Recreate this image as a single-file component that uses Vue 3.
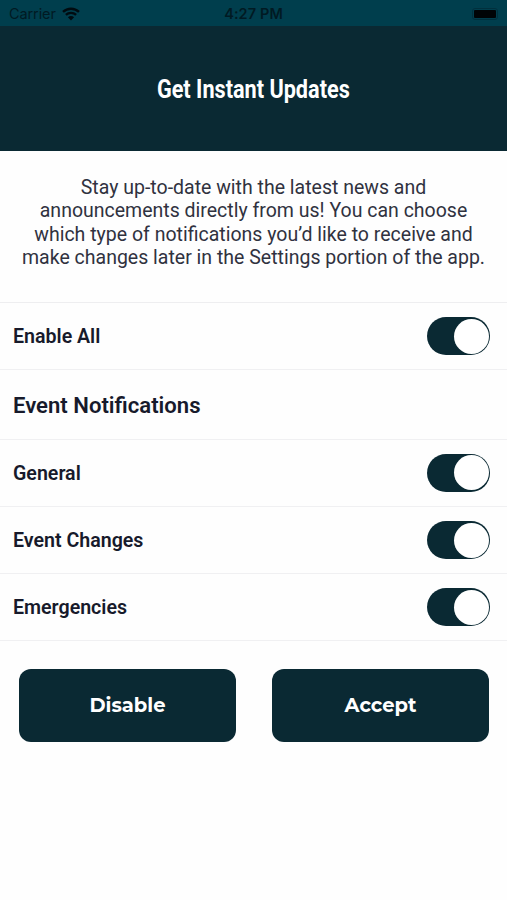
<template>
  <div class="screen">
    <div class="status-bar">
      <div class="carrier">
        <span>Carrier</span>
        <svg class="wifi" viewBox="0 0 18 14" width="18" height="14">
          <path d="M1 4.9a11.6 11.6 0 0 1 16 0" />
          <path d="M3.9 7.9a7.4 7.4 0 0 1 10.2 0" />
          <path class="dot" d="M9 13.4 5.9 10.3a4.4 4.4 0 0 1 6.2 0z" />
        </svg>
      </div>
      <span class="time">4:27 PM</span>
      <div class="battery"><i /></div>
    </div>

    <header class="header">
      <h1>Get Instant Updates</h1>
    </header>

    <p class="intro">
      Stay up-to-date with the latest news and<br />
      announcements directly from us! You can choose<br />
      which type of notifications you’d like to receive and<br />
      make changes later in the Settings portion of the app.
    </p>

    <div class="list">
      <div class="row" @click="toggleAll">
        <span class="name">Enable All</span>
        <span class="switch" :class="{ on: allEnabled }" />
      </div>
      <h2>Event Notifications</h2>
      <div v-for="item in items" :key="item.name" class="row" @click="item.on = !item.on">
        <span class="name">{{ item.name }}</span>
        <span class="switch" :class="{ on: item.on }" />
      </div>
    </div>

    <div class="actions">
      <button @click="setAll(false)">Disable</button>
      <button @click="setAll(true)">Accept</button>
    </div>
  </div>
</template>

<script setup>
import { computed, ref } from 'vue'

const items = ref([
  { name: 'General',       on: true },
  { name: 'Event Changes', on: true },
  { name: 'Emergencies',   on: true },
])

const allEnabled = computed(() => items.value.every(i => i.on))

function setAll(value) {
  items.value.forEach(i => { i.on = value })
}

function toggleAll() {
  setAll(!allEnabled.value)
}
</script>

<style>
body { background: #fff; }
</style>

<style scoped>
.screen {
  height: 900px;
  overflow: hidden;
  background: #fefefe;
  color: #171a2b;
  font-family: Roboto, "Liberation Sans", sans-serif;
}

/* ── status bar ── */
.status-bar {
  box-sizing: border-box;
  height: 26px;
  padding: 1px 9px 0;
  display: grid;
  grid-template-columns: 1fr auto 1fr;
  align-items: center;
  background: #003e4d;
  color: #001a23;
  font: 14.5px Inter, sans-serif;
}

.carrier {
  display: flex;
  align-items: center;
  gap: 6px;
  letter-spacing: -.1px;
}

.wifi path {
  fill: none;
  stroke: #000b10;
  stroke-width: 2.4;
}

.wifi .dot {
  fill: #000b10;
  stroke: none;
}

.time {
  font-weight: 600;
  letter-spacing: .1px;
}

.battery {
  justify-self: end;
  padding: 1px;
  border: 1px solid #00303d;
  border-radius: 3px;
}

.battery i {
  display: block;
  width: 22px;
  height: 8px;
  border-radius: 1px;
  background: #000406;
}

/* ── header ── */
.header {
  height: 125px;
  display: flex;
  justify-content: center;
  background: #0a2933;
}

h1 {
  margin: 49px 0 0;
  color: #fff;
  font-size: 25px;
  line-height: 30px;
  font-weight: 700;
  white-space: nowrap;
  transform: scaleX(.866);
}

.intro {
  margin: 0;
  padding: 25px 0 33px;
  color: #30323f;
  font-size: 19.5px;
  line-height: 23.25px;
  text-align: center;
  white-space: nowrap;
}

/* ── notification rows ── */
.list {
  border-top: 1px solid #eeeef0;
}

.row,
h2 {
  box-sizing: border-box;
  height: 67.3px;
  margin: 0;
  padding: 0 17px 0 13px;
  display: flex;
  align-items: center;
  justify-content: space-between;
  border-bottom: 1px solid #f0f0f2;
}

.name {
  padding-top: 1px;
  font-size: 19.6px;
  font-weight: 600;
}

h2 {
  height: 69.3px;
  padding-top: 1px;
  font-size: 22.1px;
  font-weight: 600;
}

.switch {
  box-sizing: border-box;
  width: 63px;
  height: 38px;
  padding: 1.5px;
  display: flex;
  border-radius: 19px;
  background: #c9ced2;
}

.switch::after {
  content: "";
  width: 35px;
  height: 35px;
  border-radius: 50%;
  background: #fff;
}

.switch.on {
  justify-content: flex-end;
  background: #0a2933;
}

/* ── buttons ── */
.actions {
  display: grid;
  grid-template-columns: 1fr 1fr;
  gap: 36px;
  padding: 28px 18px 0 19px;
}

button {
  height: 73px;
  padding: 0 0 1px;
  border: 0;
  border-radius: 12px;
  background: #0a2933;
  color: #fff;
  font: 700 19.5px Montserrat, Inter, sans-serif;
}
</style>
